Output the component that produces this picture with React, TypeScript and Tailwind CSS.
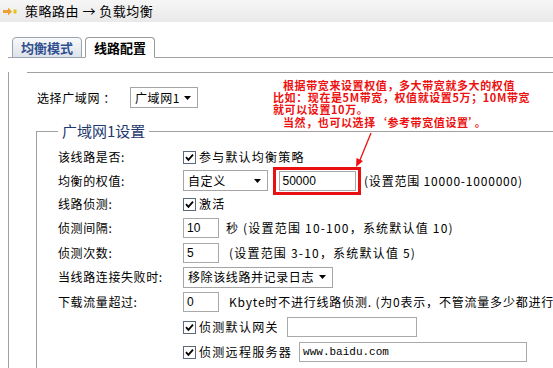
import React from "react";

const F = { fontFamily: '"Noto Sans CJK SC", "Liberation Sans", sans-serif' };

function Checkbox() {
  return (
    <div className="w-[13px] h-[13px] border border-[#5a6a7a] bg-white flex items-center justify-center shrink-0">
      <svg width="9" height="9" viewBox="0 0 9 9">
        <path d="M1 4.2 L3.4 6.8 L8 1.6" stroke="#000" strokeWidth="1.8" fill="none" />
      </svg>
    </div>
  );
}

function Select({ text, w }: { text: string; w: string }) {
  return (
    <div className={`${w} h-[21px] border border-[#a5a5a5] bg-white flex items-center justify-between pl-[4px] pr-[6px] shrink-0`}>
      <span className="tracking-[0.6px]">{text}</span>
      <svg width="7" height="4" viewBox="0 0 7 4">
        <path d="M0 0 L7 0 L3.5 4 Z" fill="#000" />
      </svg>
    </div>
  );
}

function Input({ value, w, mono }: { value?: string; w: string; mono?: boolean }) {
  return (
    <div
      className={`${w} h-[20px] border border-[#a9a9a9] bg-white flex items-center pl-[3px] shrink-0 ${mono ? "text-[11px]" : "text-[12px]"}`}
      style={{ fontFamily: mono ? '"Liberation Mono", monospace' : '"Liberation Sans", sans-serif' }}
    >
      {value}
    </div>
  );
}

function Row({ h, label, children }: { h: string; label?: string; children: React.ReactNode }) {
  return (
    <div className={`flex items-center ${h} whitespace-nowrap`}>
      <div className="w-[125px] shrink-0 tracking-[0.6px]">{label}</div>
      <div className="flex items-center">{children}</div>
    </div>
  );
}

export default function App() {
  return (
    <div className="relative w-[553px] h-[368px] overflow-hidden bg-white text-[12px] text-black" style={F}>
      {/* top bar */}
      <div className="h-[22px] flex items-center pl-[3px] bg-gradient-to-b from-[#f6f6f6] to-[#e9e9e9]">
        <svg width="14" height="9" viewBox="0 0 14 9" className="mr-[8px]">
          <path d="M0 3 L5 3 L5 0.5 L9 4.5 L5 8.5 L5 6 L0 6 Z" fill="#f0a030" />
          <rect x="10.5" y="2.5" width="3" height="4" fill="#e8c21a" />
        </svg>
        <span className="text-[13px] tracking-[0.5px]">策略路由 → 负载均衡</span>
      </div>

      {/* tabs */}
      <div className="mt-[15px] ml-[8px] pl-[4px] h-[21px] flex items-end gap-[3px] border-b border-[#a0a0a0]">
        <div className="h-[21px] -mb-px w-[70px] flex items-center justify-center rounded-t-[4px] border border-[#9aa4b0] bg-gradient-to-b from-[#f8f9fb] to-[#dde3ea] text-[13px] font-bold text-[#2f4f8f]">
          均衡模式
        </div>
        <div className="h-[21px] -mb-px w-[70px] flex items-center justify-center rounded-t-[4px] border border-[#9a9a9a] border-b-white bg-white text-[13px] font-bold text-black">
          线路配置
        </div>
      </div>

      {/* panel */}
      <div className="ml-[8px] border-l border-[#a0a0a0] h-[400px]">
        <div className="ml-[18px] mt-[14px] border-t border-[#a0a0a0] w-[620px]">
          <div className="mt-[14px] pl-[10px] h-[21px] flex items-center">
            <div className="w-[93px] tracking-[0.6px]">选择广域网 ：</div>
            <Select text="广域网1" w="w-[68px]" />
          </div>

          <fieldset className="mt-[14px] ml-[9px] border border-[#a0a0a0] pl-[21px] pt-[5px] h-[400px] w-[600px]">
            <legend className="px-[4px] text-[15px] leading-[18px] text-[#1f3a6e]">广域网1设置</legend>

            <Row h="h-[24px]" label="该线路是否:">
              <Checkbox />
              <span className="ml-[3px] tracking-[1.2px]">参与默认均衡策略</span>
            </Row>
            <Row h="h-[23px]" label="均衡的权值:">
              <Select text="自定义" w="w-[85px]" />
              <div className="ml-[5px] w-[88px] h-[28px] border-[3px] border-[#e81010] flex items-center justify-center shrink-0">
                <Input value="50000" w="w-[77px]" />
              </div>
              <span className="ml-[3px] tracking-[0.8px]">(设置范围 10000-1000000)</span>
            </Row>
            <Row h="h-[24px]" label="线路侦测:">
              <Checkbox />
              <span className="ml-[3px] tracking-[1.2px]">激活</span>
            </Row>
            <Row h="h-[24px]" label="侦测间隔:">
              <Input value="10" w="w-[36px]" />
              <span className="ml-[7px] tracking-[1.2px]">秒 (设置范围 10-100，系统默认值 10)</span>
            </Row>
            <Row h="h-[25px]" label="侦测次数:">
              <Input value="5" w="w-[36px]" />
              <span className="ml-[10px] tracking-[1.2px]">(设置范围 3-10，系统默认值 5)</span>
            </Row>
            <Row h="h-[24px]" label="当线路连接失败时:">
              <Select text="移除该线路并记录日志" w="w-[150px]" />
            </Row>
            <Row h="h-[25px]" label="下载流量超过:">
              <Input value="0" w="w-[36px]" />
              <span className="ml-[10px] tracking-[0.8px]">Kbyte时不进行线路侦测. (为0表示，不管流量多少都进行线路侦测)</span>
            </Row>
            <Row h="h-[26px]">
              <Checkbox />
              <span className="ml-[3px] mr-[8px] tracking-[1.3px]">侦测默认网关</span>
              <Input w="w-[130px]" />
            </Row>
            <Row h="h-[24px]">
              <Checkbox />
              <span className="ml-[3px] mr-[7px] tracking-[1.3px]">侦测远程服务器</span>
              <Input value="www.baidu.com" w="w-[228px]" mono />
            </Row>
          </fieldset>
        </div>
      </div>

      {/* annotation overlay */}
      <div className="absolute left-[273px] top-[79px] text-[11px] leading-[12px] font-bold text-[#ee1111] whitespace-nowrap tracking-[0.6px]">
        <div className="pl-[10px]">根据带宽来设置权值，多大带宽就多大的权值</div>
        <div>比如：现在是5M带宽，权值就设置5万；10M带宽</div>
        <div>就可以设置10万。</div>
        <div className="pl-[10px] mt-[1px]">当然，也可以选择‘参考带宽值设置’。</div>
      </div>
      <svg className="absolute left-0 top-0" width="553" height="368" viewBox="0 0 553 368">
        <line x1="371" y1="133" x2="360" y2="160" stroke="#ee1111" strokeWidth="1.3" />
        <path d="M356 167 L356.5 158 L363 161 Z" fill="#ee1111" />
      </svg>
    </div>
  );
}
